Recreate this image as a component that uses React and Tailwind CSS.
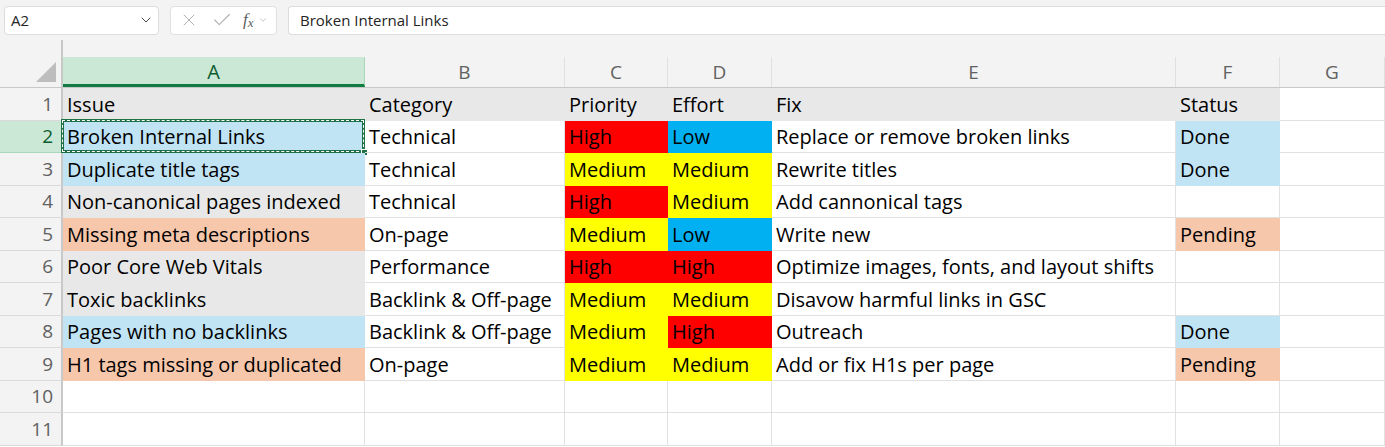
import { ChevronDown, X, Check } from 'lucide-react'

const cols = [
  { key: 'A', w: 302 },
  { key: 'B', w: 200 },
  { key: 'C', w: 103 },
  { key: 'D', w: 104 },
  { key: 'E', w: 404 },
  { key: 'F', w: 104 },
  { key: 'G', w: 105 },
]

const fills = {
  hd: 'bg-[#e8e8e8] border-[#e8e8e8]',
  gr: 'bg-[#e8e8e8] border-[#e8e8e8]',
  lb: 'bg-[#c1e4f5] border-[#c1e4f5]',
  pe: 'bg-[#f7c7ac] border-[#f7c7ac]',
  r: 'bg-[#ff0000] border-[#ff0000]',
  y: 'bg-[#ffff00] border-[#ffff00]',
  b: 'bg-[#00b0f0] border-[#00b0f0]',
}

const H = ['hd', 'hd', 'hd', 'hd', 'hd', 'hd', null]

const rows = [
  { cells: ['Issue', 'Category', 'Priority', 'Effort', 'Fix', 'Status', ''], fill: H },
  { cells: ['Broken Internal Links', 'Technical', 'High', 'Low', 'Replace or remove broken links', 'Done', ''], fill: ['lb', null, 'r', 'b', null, 'lb', null] },
  { cells: ['Duplicate title tags', 'Technical', 'Medium', 'Medium', 'Rewrite titles', 'Done', ''], fill: ['lb', null, 'y', 'y', null, 'lb', null] },
  { cells: ['Non-canonical pages indexed', 'Technical', 'High', 'Medium', 'Add cannonical tags', '', ''], fill: ['gr', null, 'r', 'y', null, null, null] },
  { cells: ['Missing meta descriptions', 'On-page', 'Medium', 'Low', 'Write new', 'Pending', ''], fill: ['pe', null, 'y', 'b', null, 'pe', null] },
  { cells: ['Poor Core Web Vitals', 'Performance', 'High', 'High', 'Optimize images, fonts, and layout shifts', '', ''], fill: ['gr', null, 'r', 'r', null, null, null] },
  { cells: ['Toxic backlinks', 'Backlink & Off-page', 'Medium', 'Medium', 'Disavow harmful links in GSC', '', ''], fill: ['gr', null, 'y', 'y', null, null, null] },
  { cells: ['Pages with no backlinks', 'Backlink & Off-page', 'Medium', 'High', 'Outreach', 'Done', ''], fill: ['lb', null, 'y', 'r', null, 'lb', null] },
  { cells: ['H1 tags missing or duplicated', 'On-page', 'Medium', 'Medium', 'Add or fix H1s per page', 'Pending', ''], fill: ['pe', null, 'y', 'y', null, 'pe', null] },
  { cells: ['', '', '', '', '', '', ''], fill: [] },
  { cells: ['', '', '', '', '', '', ''], fill: [] },
]

const font = { fontFamily: '"Open Sans", "Liberation Sans", sans-serif' }

function FormulaBar() {
  return (
    <div className="flex items-center h-[40px] bg-[#f3f3f3] pl-[4px] gap-[11px]">
      <div className="flex items-center justify-between w-[155px] h-[29px] bg-white rounded-[4px] border border-[#dcdcdc] pl-[6px] pr-[4px] text-[15px] text-[#242424]">
        <span>A2</span>
        <ChevronDown size={16} strokeWidth={1.5} className="text-[#424242]" />
      </div>
      <div className="flex items-center w-[107px] h-[29px] bg-white rounded-[4px] border border-[#e0e0e0] pl-[8px] gap-[12px] text-[#b0b0b0]">
        <X size={20} strokeWidth={1.2} />
        <Check size={22} strokeWidth={1.2} />
        <span className="flex items-center text-[#606060] italic text-[17px] -ml-[2px]" style={{ fontFamily: '"Liberation Serif", serif' }}>
          f<span className="text-[13px] -mb-[5px]">x</span>
          <ChevronDown size={10} strokeWidth={1.5} className="ml-[4px] text-[#a0a0a0]" />
        </span>
      </div>
      <div className="flex items-center flex-1 h-[29px] bg-white rounded-l-[4px] border border-r-0 border-[#dcdcdc] pl-[11px] text-[15px] text-[#242424]">
        Broken Internal Links
      </div>
    </div>
  )
}

export default function App() {
  return (
    <div className="w-[1385px] h-[447px] overflow-hidden bg-white text-black" style={font}>
      <FormulaBar />
      <div className="h-[17px] bg-[#f3f3f3] flex">
        <div className="w-[63px] border-r-[2px] border-[#c8c8c8]" />
      </div>
      {/* column headers */}
      <div className="flex h-[31px] bg-[#f3f3f3] border-b border-[#c8c8c8]">
        <div className="relative w-[63px] shrink-0 border-r-[2px] border-[#c8c8c8]">
          <div className="absolute right-[5px] bottom-[5px] w-0 h-0 border-l-[20px] border-l-transparent border-b-[20px] border-b-[#bdbdbd]" />
        </div>
        {cols.map((c) =>
          c.key === 'A' ? (
            <div key={c.key} style={{ width: c.w }} className="shrink-0 flex items-center justify-center bg-[#cae8d5] border-b-[3px] border-[#107c41] border-r border-r-[#a8d8b9] text-[20px] text-[#0e5c2f] pt-[2px]">
              {c.key}
            </div>
          ) : (
            <div key={c.key} style={{ width: c.w }} className="shrink-0 flex items-center justify-center border-r border-[#e0e0e0] text-[19px] text-[#616161]">
              {c.key}
            </div>
          )
        )}
      </div>
      {rows.map((r, i) => (
        <div key={i} className="flex h-[32.5px]">
          <div className={`w-[63px] shrink-0 flex items-center justify-end pr-[8px] text-[19px] border-r-[2px] border-b ${i === 1 ? 'bg-[#cae8d5] text-[#0e5c2f] border-b-[#a8d8b9] border-r-[#c8c8c8]' : 'bg-[#f3f3f3] text-[#616161] border-[#dadada] border-r-[#c8c8c8]'}`}>
            {i + 1}
          </div>
          {cols.map((c, j) => {
            const f = r.fill[j]
            const cls = f ? fills[f] : 'border-[#e1e1e1]'
            const sel = i === 1 && j === 0
            return (
              <div key={c.key} style={{ width: c.w }} className={`relative shrink-0 flex items-end pl-[4px] pb-[1px] border-r border-b whitespace-nowrap text-[20px] leading-[28px] ${cls}`}>
                {r.cells[j]}
                {sel && (
                  <>
                    <div className="absolute -left-[2px] -top-[2px] -right-[1px] -bottom-[1px] border-[3px] border-[#1e7145]" />
                    <div className="absolute -left-[1px] -top-[1px] right-0 bottom-0 border-[1px] border-dashed border-white" />
                    <div className="absolute -right-[4px] -bottom-[4px] w-[7px] h-[7px] bg-[#1e7145] border border-white" />
                  </>
                )}
              </div>
            )
          })}
        </div>
      ))}
    </div>
  )
}
